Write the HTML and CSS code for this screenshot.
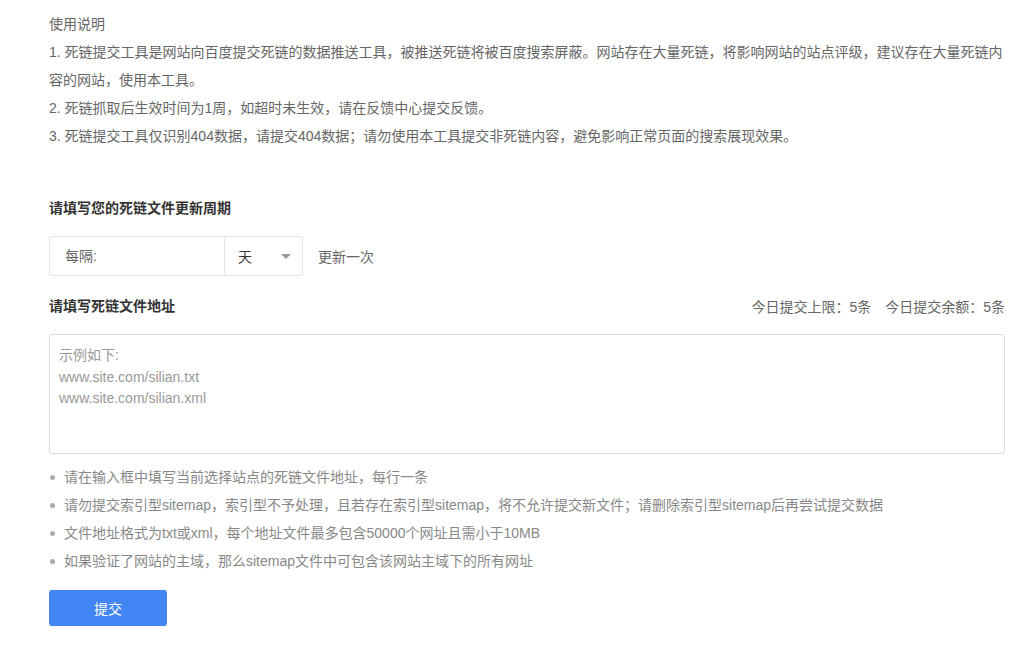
FILE: index.html
```html
<!DOCTYPE html>
<html lang="zh">
<head>
<meta charset="utf-8">
<link rel="stylesheet" href="styles.css">
</head>
<body>
<div class="page">
  <section class="intro">
    <p>使用说明</p>
    <p>1. 死链提交工具是网站向百度提交死链的数据推送工具，被推送死链将被百度搜索屏蔽。网站存在大量死链，将影响网站的站点评级，建议存在大量死链内容的网站，使用本工具。</p>
    <p>2. 死链抓取后生效时间为1周，如超时未生效，请在反馈中心提交反馈。</p>
    <p>3. 死链提交工具仅识别404数据，请提交404数据；请勿使用本工具提交非死链内容，避免影响正常页面的搜索展现效果。</p>
  </section>

  <h3 class="title first">请填写您的死链文件更新周期</h3>
  <div class="period">
    <div class="select-box">
      <div class="label">每隔:</div>
      <div class="unit"><span>天</span><span class="caret"></span></div>
    </div>
    <span class="after">更新一次</span>
  </div>

  <div class="addr-head">
    <h3 class="title">请填写死链文件地址</h3>
    <div class="quota">今日提交上限：5条<span class="gap"></span>今日提交余额：5条</div>
  </div>
  <div class="textarea">
    <div class="ph">示例如下:</div>
    <div class="ph">www.site.com/silian.txt</div>
    <div class="ph">www.site.com/silian.xml</div>
  </div>

  <ul class="tips">
    <li>请在输入框中填写当前选择站点的死链文件地址，每行一条</li>
    <li>请勿提交索引型sitemap，索引型不予处理，且若存在索引型sitemap，将不允许提交新文件；请删除索引型sitemap后再尝试提交数据</li>
    <li>文件地址格式为txt或xml，每个地址文件最多包含50000个网址且需小于10MB</li>
    <li>如果验证了网站的主域，那么sitemap文件中可包含该网站主域下的所有网址</li>
  </ul>

  <button class="submit">提交</button>
</div>
</body>
</html>
```

FILE: styles.css
```css
html, body {
  margin: 0;
  padding: 0;
  background: #fff;
}
body {
  font-family: "Liberation Sans", "Noto Sans CJK SC", sans-serif;
  font-size: 14px;
  color: #666;
}
.page {
  width: 956px;
  padding: 10px 0 0 49px;
}
.intro p {
  margin: 0;
  line-height: 28px;
}
.title {
  margin: 0;
  font-size: 14px;
  font-weight: bold;
  color: #333;
  line-height: 28px;
}
.title.first {
  margin-top: 44px;
}
.period {
  display: flex;
  align-items: center;
  margin-top: 14px;
}
.select-box {
  display: flex;
  width: 252px;
  height: 38px;
  border: 1px solid #e4e4e4;
  border-radius: 3px;
}
.label {
  width: 159px;
  padding-left: 15px;
  line-height: 38px;
  color: #666;
  border-right: 1px solid #e4e4e4;
}
.unit {
  flex: 1;
  display: flex;
  align-items: center;
  justify-content: space-between;
  padding: 0 11px 0 13px;
  color: #333;
  font-size: 14px;
}
.caret {
  width: 0;
  height: 0;
  border-left: 5px solid transparent;
  border-right: 5px solid transparent;
  border-top: 5px solid #999;
}
.after {
  margin-left: 15px;
  color: #666;
}
.addr-head {
  display: flex;
  justify-content: space-between;
  align-items: center;
  margin-top: 16px;
}
.quota {
  color: #666;
}
.gap {
  display: inline-block;
  width: 14px;
}
.textarea {
  margin-top: 14px;
  height: 98px;
  border: 1px solid #ddd;
  border-radius: 3px;
  padding: 10px 9px 10px 9px;
}
.ph {
  color: #999;
  font-size: 14px;
  line-height: 21.5px;
}
.tips {
  list-style: none;
  margin: 9px 0 0;
  padding: 0;
}
.tips li {
  position: relative;
  padding-left: 15px;
  line-height: 28px;
  color: #888;
}
.tips li::before {
  content: "";
  position: absolute;
  left: 1px;
  top: 12px;
  width: 5px;
  height: 5px;
  border-radius: 50%;
  background: #aaa;
}
.submit {
  display: block;
  margin-top: 15px;
  width: 118px;
  height: 36px;
  border: none;
  border-radius: 3px;
  background: #4285f4;
  color: #fff;
  font-family: inherit;
  font-size: 14px;
  cursor: pointer;
}
```
